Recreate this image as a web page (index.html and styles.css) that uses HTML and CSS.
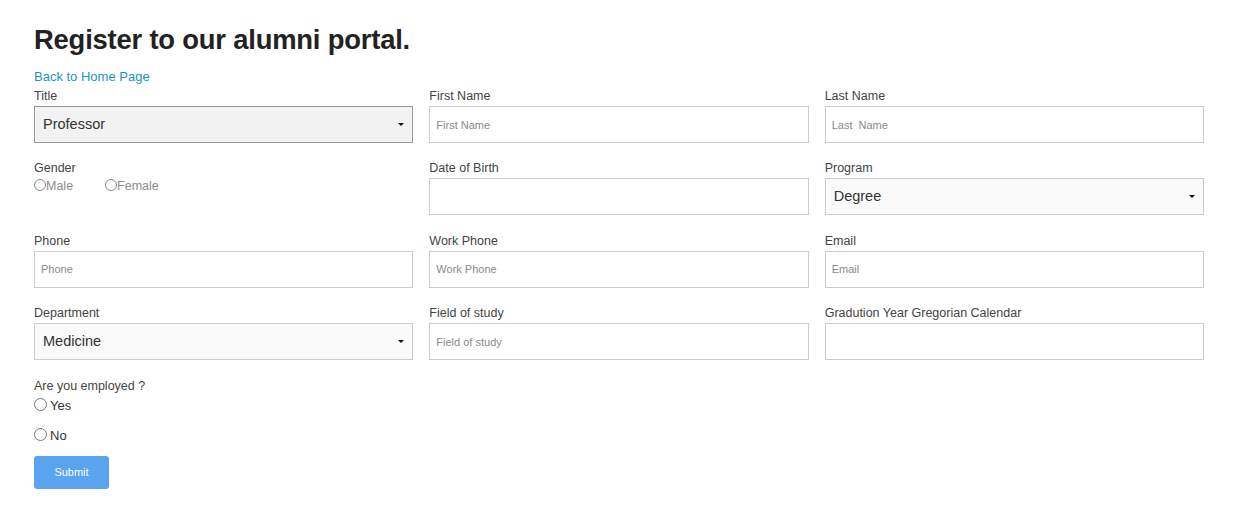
FILE: index.html
```html
<!DOCTYPE html>
<html>
<head>
<meta charset="utf-8">
<link rel="stylesheet" href="styles.css">
</head>
<body>
<div class="page">
  <h1 class="title">Register to our alumni portal.</h1>
  <a class="back" href="#">Back to Home Page</a>
  <form class="form">
    <div class="grid">
      <div class="field">
        <label class="label">Title</label>
        <div class="select-wrap dark">
          <select class="select"><option>Professor</option></select>
        </div>
      </div>
      <div class="field">
        <label class="label">First Name</label>
        <input class="input" placeholder="First Name">
      </div>
      <div class="field">
        <label class="label">Last Name</label>
        <input class="input" placeholder="Last  Name">
      </div>

      <div class="field">
        <label class="label">Gender</label>
        <div class="gender">
          <label class="g-opt"><input type="radio" name="g" class="g-radio">Male</label>
          <label class="g-opt"><input type="radio" name="g" class="g-radio">Female</label>
        </div>
      </div>
      <div class="field">
        <label class="label">Date of Birth</label>
        <input class="input">
      </div>
      <div class="field">
        <label class="label">Program</label>
        <div class="select-wrap">
          <select class="select"><option>Degree</option></select>
        </div>
      </div>

      <div class="field">
        <label class="label">Phone</label>
        <input class="input" placeholder="Phone">
      </div>
      <div class="field">
        <label class="label">Work Phone</label>
        <input class="input" placeholder="Work Phone">
      </div>
      <div class="field">
        <label class="label">Email</label>
        <input class="input" placeholder="Email">
      </div>

      <div class="field">
        <label class="label">Department</label>
        <div class="select-wrap">
          <select class="select"><option>Medicine</option></select>
        </div>
      </div>
      <div class="field">
        <label class="label">Field of study</label>
        <input class="input" placeholder="Field of study">
      </div>
      <div class="field">
        <label class="label">Gradution Year Gregorian Calendar</label>
        <input class="input">
      </div>
    </div>

    <div class="employed">
      <div class="label">Are you employed ?</div>
      <label class="e-opt"><input type="radio" name="e" class="e-radio">Yes</label>
      <label class="e-opt"><input type="radio" name="e" class="e-radio">No</label>
    </div>
    <button type="button" class="submit">Submit</button>
  </form>
</div>
</body>
</html>
```

FILE: styles.css
```css
* { box-sizing: border-box; }
body {
  margin: 0;
  background: #fff;
  font-family: "Liberation Sans", Arial, Helvetica, sans-serif;
  color: #333;
}
.page {
  width: 1238px;
  padding: 0 34px;
}
.title {
  margin: 24px 0 12px;
  font-size: 27.4px;
  line-height: 32px;
  font-weight: bold;
  color: #222;
  letter-spacing: -0.2px;
}
.back {
  display: block;
  font-size: 13px;
  line-height: 18px;
  color: #1b95c4;
  text-decoration: none;
  margin-bottom: 1px;
}
.form { margin: 0; }
.grid {
  display: grid;
  grid-template-columns: repeat(3, 1fr);
  column-gap: 16px;
}
.field {
  display: flex;
  flex-direction: column;
  margin-bottom: 16.4px;
  min-height: 56px;
}
.label {
  display: block;
  font-size: 12.5px;
  line-height: 16px;
  color: #444;
  padding-top: 1px;
  margin-bottom: 2px;
}
.input {
  height: 37px;
  width: 100%;
  border: 1px solid #ccc;
  border-radius: 0;
  padding: 0 6px;
  font-family: inherit;
  font-size: 11px;
  color: #333;
  background: #fff;
  outline: none;
}
.input::placeholder { color: #8a8a8a; }
.select-wrap {
  position: relative;
  height: 37px;
}
.select-wrap::after {
  content: "";
  position: absolute;
  right: 9px;
  top: 17px;
  border-left: 3px solid transparent;
  border-right: 3px solid transparent;
  border-top: 3px solid #111;
  pointer-events: none;
}
.select {
  -webkit-appearance: none;
  appearance: none;
  width: 100%;
  height: 37px;
  border: 1px solid #ccc;
  border-radius: 0;
  background: #fafafa;
  padding: 0 8px 1px;
  font-family: inherit;
  font-size: 14.5px;
  color: #333;
  outline: none;
}
.select-wrap.dark .select {
  background: #f2f2f2;
  border-color: #999;
}
.gender {
  display: flex;
  gap: 32px;
  margin-top: -1px;
}
.g-opt {
  display: flex;
  align-items: center;
  font-size: 12.5px;
  line-height: 18px;
  color: #8c8c8c;
}
.g-radio {
  -webkit-appearance: none;
  appearance: none;
  width: 12px;
  height: 12px;
  margin: 0;
  border: 1px solid #888;
  border-radius: 50%;
  background: #fff;
  position: relative;
  top: -1px;
}
.employed {
  margin-top: 0;
}
.employed .label { margin-bottom: 2px; }
.e-opt {
  display: flex;
  align-items: center;
  gap: 3px;
  font-size: 13px;
  line-height: 20px;
  color: #333;
  margin-bottom: 10px;
}
.e-radio {
  -webkit-appearance: none;
  appearance: none;
  width: 13px;
  height: 13px;
  margin: 0;
  border: 1px solid #777;
  border-radius: 50%;
  background: #fff;
  position: relative;
  top: -1px;
}
.submit {
  display: block;
  width: 75px;
  height: 33px;
  margin-top: 3px;
  border: none;
  border-radius: 3px;
  background: #5aa3ef;
  color: #fff;
  font-family: inherit;
  font-size: 11px;
  cursor: pointer;
}
```
